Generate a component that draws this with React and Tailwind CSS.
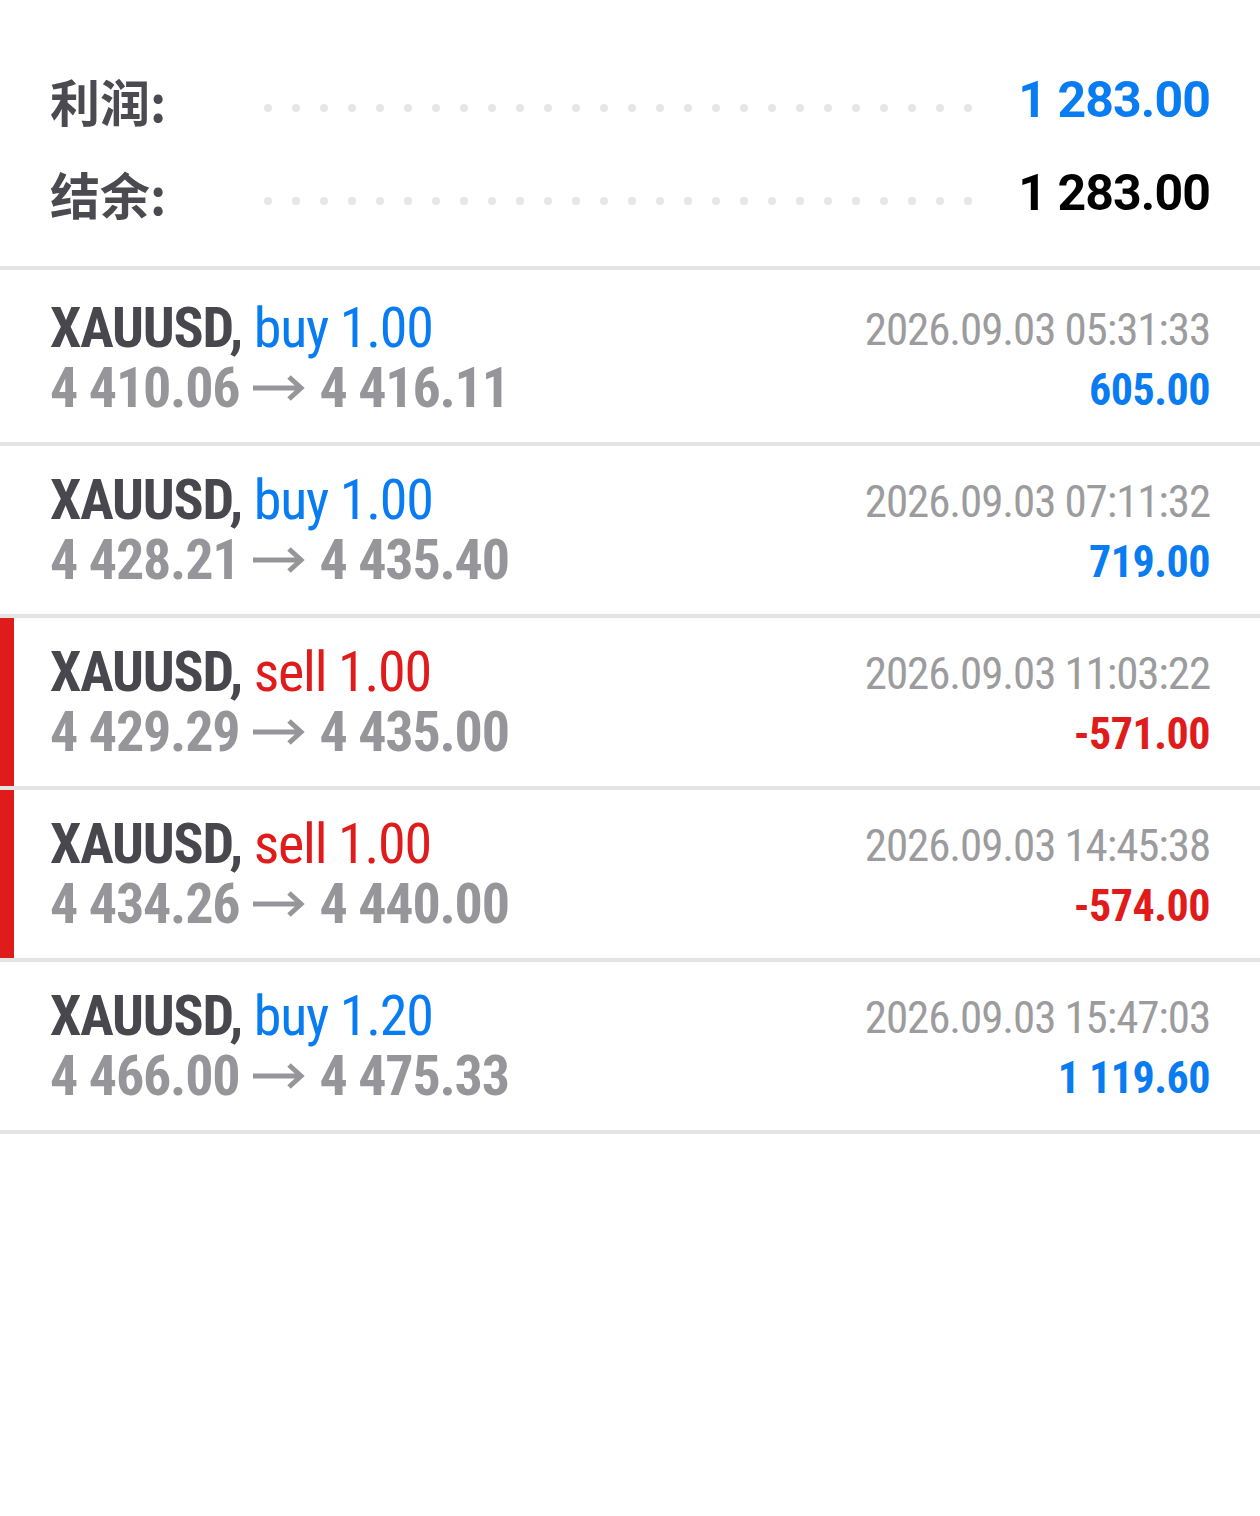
import React from 'react';

const trades = [
  { side: 'buy', vol: '1.00', open: '4 410.06', close: '4 416.11', time: '2026.09.03 05:31:33', profit: '605.00' },
  { side: 'buy', vol: '1.00', open: '4 428.21', close: '4 435.40', time: '2026.09.03 07:11:32', profit: '719.00' },
  { side: 'sell', vol: '1.00', open: '4 429.29', close: '4 435.00', time: '2026.09.03 11:03:22', profit: '-571.00' },
  { side: 'sell', vol: '1.00', open: '4 434.26', close: '4 440.00', time: '2026.09.03 14:45:38', profit: '-574.00' },
  { side: 'buy', vol: '1.20', open: '4 466.00', close: '4 475.33', time: '2026.09.03 15:47:03', profit: '1 119.60' },
];

const Dots = () => (
  <div className="flex-1 flex justify-between pt-[14px]">
    {Array.from({ length: 26 }).map((_, i) => (
      <span key={i} className="w-[8px] h-[8px] rounded-full bg-[#e6e6e6]" />
    ))}
  </div>
);

const SummaryRow = ({ label, value, color }) => (
  <div className="flex items-center h-[93px]">
    <span className="w-[214px] text-[50px] font-bold text-[#4a4a50] font-['Noto_Sans_CJK_SC',sans-serif]">{label}</span>
    <Dots />
    <span className={`ml-[46px] text-[50px] font-bold font-['Roboto',sans-serif] [font-stretch:normal] tracking-[-0.9px] ${color}`}>{value}</span>
  </div>
);

const Arrow = () => (
  <svg width="52" height="28" viewBox="0 0 52 28" className="inline-block mx-[14px] align-[2px]">
    <path d="M0 14 H48" stroke="#96969a" strokeWidth="5" fill="none" />
    <path d="M36 3 L48 14 L36 25" stroke="#96969a" strokeWidth="5" fill="none" strokeLinejoin="miter" />
  </svg>
);

const App = () => {
  return (
    <div className="w-[1260px] h-[1516px] bg-white font-['Roboto',sans-serif] [font-stretch:condensed]">
      <div className="px-[50px] pt-[54px] pb-[26px]">
        <SummaryRow label="利润:" value="1 283.00" color="text-[#0a7cf2]" />
        <SummaryRow label="结余:" value="1 283.00" color="text-black" />
      </div>
      <div className="border-t-[4px] border-[#e4e4e4] pt-[4px]">
        {trades.map((t, idx) => {
          const isSell = t.side === 'sell';
          return (
            <div key={idx} className="flex border-b-[4px] border-[#e4e4e4] h-[172px]">
              <div className={`w-[14px] ${isSell ? 'bg-[#e01b1b]' : 'bg-white'}`} />
              <div className="flex-1 flex justify-between pl-[36px] pr-[50px] pt-[24px]">
                <div className="leading-[60px] text-[56px] tracking-[-1.2px]">
                  <div>
                    <span className="font-bold text-[#47474d]">XAUUSD,</span>{' '}
                    <span className={isSell ? 'text-[#e01b1b]' : 'text-[#0a7cf2]'}>{t.side} {t.vol}</span>
                  </div>
                  <div className="font-bold text-[#96969a] flex items-center">
                    <span>{t.open}</span>
                    <Arrow />
                    <span>{t.close}</span>
                  </div>
                </div>
                <div className="text-right">
                  <div className="text-[45px] leading-[60px] text-[#9c9c9e] pt-[2px] tracking-[-1.1px]">{t.time}</div>
                  <div className={`text-[44px] leading-[60px] font-bold tracking-[-0.5px] ${t.profit.startsWith('-') ? 'text-[#e01b1b]' : 'text-[#0a7cf2]'}`}>{t.profit}</div>
                </div>
              </div>
            </div>
          );
        })}
      </div>
    </div>
  );
};

export default App;
